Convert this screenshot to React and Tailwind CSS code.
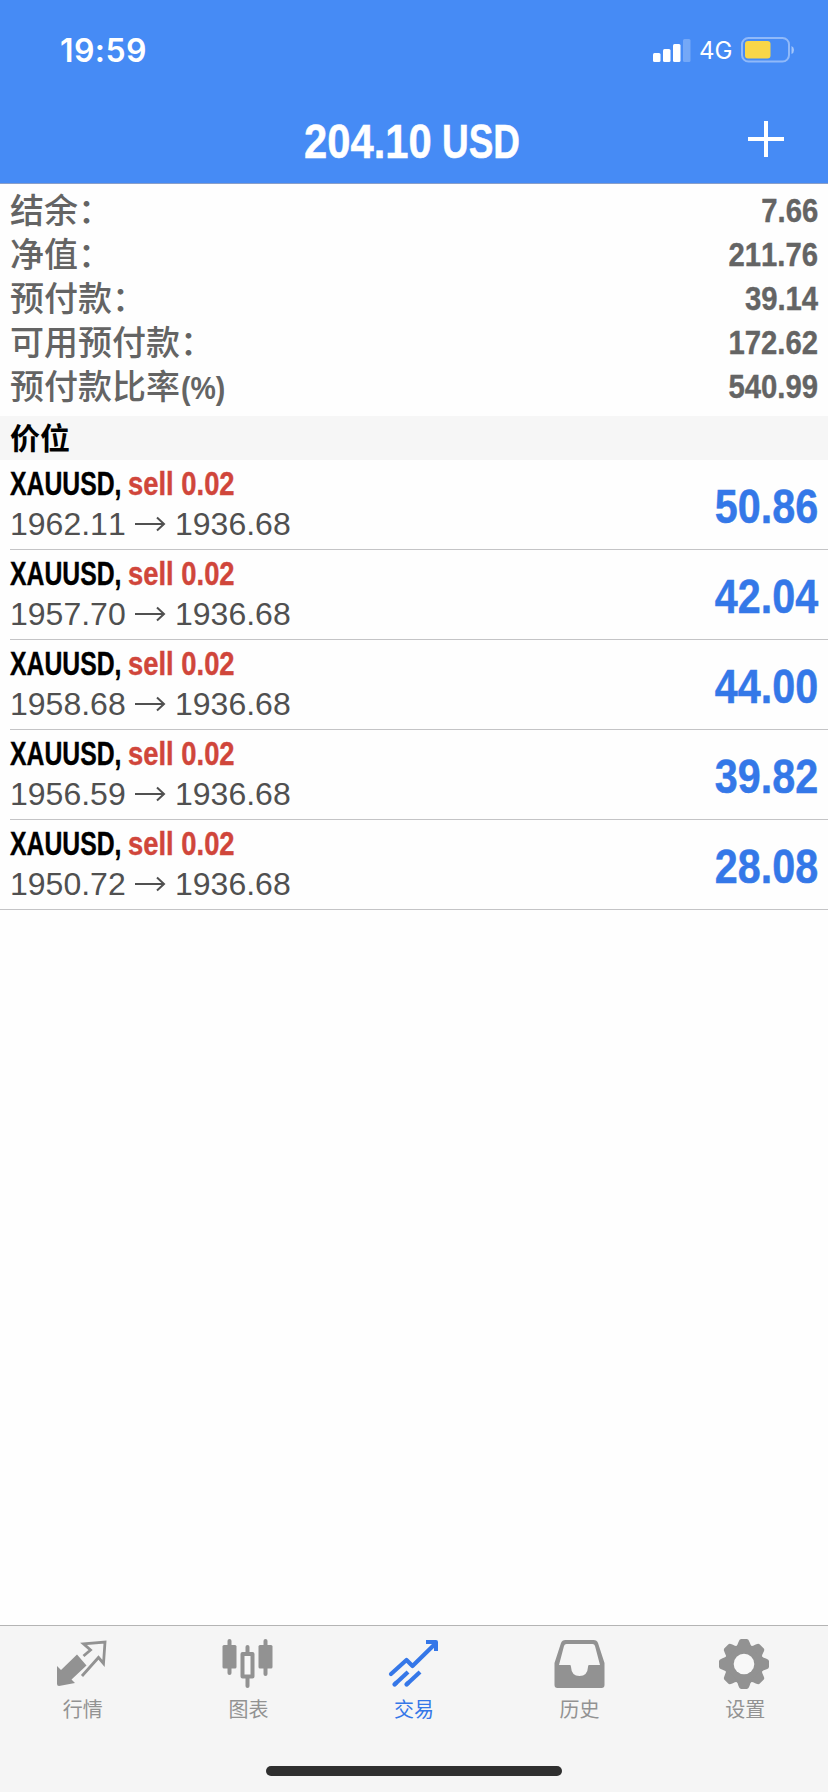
const summary = [
  { label: '结余：', value: '7.66' },
  { label: '净值：', value: '211.76' },
  { label: '预付款：', value: '39.14' },
  { label: '可用预付款：', value: '172.62' },
  { label: '预付款比率', suffix: '(%)', value: '540.99' },
];

const positions = [
  { open: '1962.11', profit: '50.86' },
  { open: '1957.70', profit: '42.04' },
  { open: '1958.68', profit: '44.00' },
  { open: '1956.59', profit: '39.82' },
  { open: '1950.72', profit: '28.08' },
];

function QuotesIcon() {
  return (
    <svg width="52" height="52" viewBox="0 0 52 52">
      <path d="M0 27 L4 31 L20 15.500 L29.500 26.500 L14.500 40.500 L18 44 L2 47 Q0 47 0 45 Z" fill="#929292" />
      <path d="M26.500 17 L33.500 11 L26.500 4.800 L48 3 L46.500 24.500 L41.500 18.500 L25 37" fill="none" stroke="#929292" strokeWidth="2.8" />
    </svg>
  );
}

function ChartIcon() {
  return (
    <svg width="52" height="52" viewBox="0 0 52 52" fill="#929292">
      <rect x="5.500" y="0" width="4" height="36" rx="2" />
      <rect x="0.500" y="6" width="14" height="23.500" rx="1.500" />
      <rect x="41.500" y="0" width="4" height="37" rx="2" />
      <rect x="36.500" y="6" width="14" height="23.500" rx="1.500" />
      <rect x="23.500" y="6" width="4" height="43" rx="2" />
      <rect x="20.500" y="15" width="10" height="22.500" fill="#f8f8f8" stroke="#929292" strokeWidth="4" strokeLinejoin="round" />
    </svg>
  );
}

function TradeIcon() {
  return (
    <svg width="52" height="52" viewBox="0 0 52 52" fill="none" stroke="#3577e8" strokeWidth="4.2">
      <path d="M3 35 L18.500 21 L24.500 27 L47.500 4.500" strokeLinecap="round" strokeLinejoin="round" />
      <path d="M38 3 H48 V12" strokeWidth="4" strokeLinejoin="round" />
      <path d="M6 46 L20 33" />
      <path d="M18 46 L32 33" />
      <path d="M6.500 45.500 L8 44 M18.500 45.500 L20 44" strokeLinecap="round" />
    </svg>
  );
}

function HistoryIcon() {
  return (
    <svg width="52" height="52" viewBox="0.5 0 52 52">
      <path
        fill="#929292"
        fillRule="evenodd"
        d="M12 1 H40 Q43.500 1 44.500 4 L51 24 V46 Q51 49 48 49 H4 Q1 49 1 46 V24 L7.500 4 Q8.500 1 12 1 Z M13 5 Q11 5 10.500 7 L5.500 26 H16.500 Q17.500 26 17.500 28 Q18 37 26 37 Q34 37 34.500 28 Q34.500 26 35.500 26 H46.500 L41.500 7 Q41 5 39 5 Z"
      />
    </svg>
  );
}

function SettingsIcon() {
  return (
    <svg width="52" height="52" viewBox="-25 -25 52 52">
      <g fill="#929292">
        <circle r="19.500" />
        <path id="tooth" d="M-9 -16.500 Q-6.500 -18 -5.500 -22 Q-4.500 -25 -3 -25 H3 Q4.500 -25 5.500 -22 Q6.500 -18 9 -16.500 Z" />
        <use href="#tooth" transform="rotate(45)" />
        <use href="#tooth" transform="rotate(90)" />
        <use href="#tooth" transform="rotate(135)" />
        <use href="#tooth" transform="rotate(180)" />
        <use href="#tooth" transform="rotate(225)" />
        <use href="#tooth" transform="rotate(270)" />
        <use href="#tooth" transform="rotate(315)" />
      </g>
      <circle r="10.300" fill="#f8f8f8" />
    </svg>
  );
}

const tabs = [
  { label: '行情', icon: QuotesIcon },
  { label: '图表', icon: ChartIcon },
  { label: '交易', icon: TradeIcon, active: true },
  { label: '历史', icon: HistoryIcon },
  { label: '设置', icon: SettingsIcon },
];

function StatusBar() {
  return (
    <div className="flex h-[100px] items-center justify-between pr-[33px] pl-[60px] text-white">
      <span className="pt-px font-['Inter'] text-[32px] leading-none font-semibold tracking-[0.4px]">19:59</span>
      <div className="flex items-center">
        <svg width="38" height="24" viewBox="0 0 38 24" fill="#fff">
          <rect x="0" y="15" width="7.500" height="9" rx="1.500" />
          <rect x="10" y="11" width="7.500" height="13" rx="1.500" />
          <rect x="20" y="6" width="7.500" height="18" rx="1.500" />
          <rect x="30" y="1" width="7.500" height="23" rx="1.500" opacity="0.25" />
        </svg>
        <span className="ml-[8px] w-[42px] pt-[2px] font-['Inter'] text-[24px] leading-none">4G</span>
        <svg width="54" height="26" viewBox="0 0 54 26">
          <rect x="1" y="1" width="47" height="23.500" rx="6.500" fill="none" stroke="#fff" strokeOpacity="0.4" strokeWidth="2" />
          <rect x="4" y="4" width="25.500" height="17.500" rx="3" fill="#f8d648" />
          <path d="M50.500 9 Q53 10 53 13 Q53 16 50.500 17 Z" fill="#fff" fillOpacity="0.5" />
        </svg>
      </div>
    </div>
  );
}

export default function App() {
  return (
    <div className="flex h-[1792px] w-[828px] flex-col overflow-hidden bg-[#fefefe] font-['Liberation_Sans','Noto_Sans_CJK_SC',sans-serif] [font-kerning:none]">
      <header className="h-[184px] shrink-0 border-b border-[#8a9fc8] bg-[#468bf5]">
        <StatusBar />
        <div className="flex h-[83px] items-center pr-[44px] pl-[304px]">
          <h1 className="flex text-[48px] leading-none font-bold whitespace-nowrap text-white [-webkit-text-stroke:0.5px_#fff]">
            <span className="w-[138px] origin-left scale-x-[0.87]">204.10</span>
            <span className="w-[78px] origin-left scale-x-[0.77]">USD</span>
          </h1>
          <svg className="mb-[6px] ml-auto" width="36" height="36" viewBox="0 0 36 36" stroke="#fff" strokeWidth="4">
            <path d="M0 18 H36 M18 0 V36" />
          </svg>
        </div>
      </header>

      <section className="h-[232px] shrink-0 pt-1 pr-[10px] pl-[10px] text-[#646464]">
        {summary.map((s) => (
          <div key={s.value} className="flex h-11 items-center justify-between">
            <span className="mt-[2px] text-[34px] leading-none font-medium">
              {s.label}
              {s.suffix && <span className="ml-px inline-block origin-left scale-x-[0.89] text-[32px] font-bold">{s.suffix}</span>}
            </span>
            <span className="origin-right scale-x-[0.86] text-[34px] leading-none font-bold [-webkit-text-stroke:0.4px_#646464]">
              {s.value}
            </span>
          </div>
        ))}
      </section>

      <h2 className="flex h-[44px] shrink-0 items-center bg-[#f6f6f6] pt-px pl-[10px] text-[30px] leading-none font-bold text-black">价位</h2>

      <ul>
        {positions.map((p) => (
          <li key={p.open} className="ml-[10px] flex h-[90px] items-center justify-between border-b border-[#c4c4c6] pr-[10px] last:ml-0 last:pl-[10px]">
            <div className="pb-[2px]">
              <p className="flex text-[33px] leading-[41px] font-bold whitespace-nowrap text-black">
                <span className="w-[118px] origin-left scale-x-[0.75] [-webkit-text-stroke:0.4px_#000]">XAUUSD,</span>
                <span className="origin-left scale-x-[0.83] text-[#d0463b] [-webkit-text-stroke:0.4px_#d0463b]">sell 0.02</span>
              </p>
              <p className="flex items-center text-[32px] leading-[41px] text-[#505050]">
                <span className="w-[125px]">{p.open}</span>
                <svg className="mr-[9px]" width="31" height="16" viewBox="0 0 31 16" fill="none" stroke="#505050" strokeWidth="2">
                  <path d="M0 8 H29 M22 1.500 L29 8 L22 14.500" />
                </svg>
                <span>1936.68</span>
              </p>
            </div>
            <span className="mt-[5px] origin-right scale-x-[0.86] text-[48px] leading-none font-bold text-[#3478e8] [-webkit-text-stroke:0.5px_#3478e8]">
              {p.profit}
            </span>
          </li>
        ))}
      </ul>

      <footer className="mt-auto h-[167px] shrink-0 border-t border-[#b4b4b4] bg-[#f5f5f5]">
        <nav className="grid h-[140px] grid-cols-5 pt-[13px]">
          {tabs.map(({ label, icon: Icon, active }) => (
            <div
              key={label}
              className={`flex flex-col items-center ${active ? 'text-[#3577e8]' : 'text-[#929292]'}`}
            >
              <Icon />
              <span className="mt-[7px] text-[20px] leading-[24px]">{label}</span>
            </div>
          ))}
        </nav>
        <div className="mx-auto h-[10px] w-[296px] rounded-full bg-[#2f2f2f]" />
      </footer>
    </div>
  );
}
